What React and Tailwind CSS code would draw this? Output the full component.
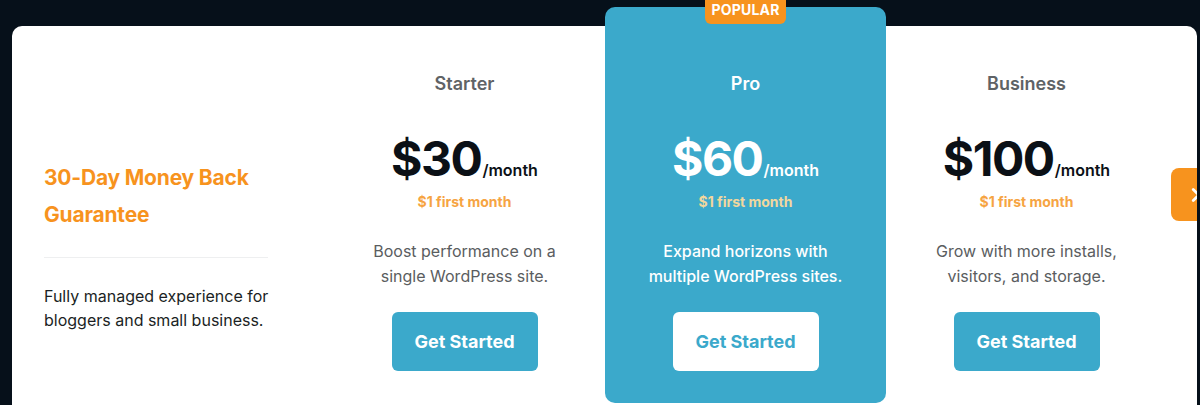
import React from 'react';
import { ChevronRight } from 'lucide-react';

const plans = [
  {
    name: 'Starter',
    price: '$30',
    desc: ['Boost performance on a', 'single WordPress site.'],
  },
  {
    name: 'Pro',
    price: '$60',
    desc: ['Expand horizons with', 'multiple WordPress sites.'],
    popular: true,
  },
  {
    name: 'Business',
    price: '$100',
    desc: ['Grow with more installs,', 'visitors, and storage.'],
  },
];

function PlanColumn({ plan }) {
  const hot = plan.popular;
  return (
    <div
      className={
        hot
          ? 'relative w-[281px] -mt-[19px] h-[396px] rounded-[10px] bg-[#3ba9cb] pt-[63px] flex flex-col items-center'
          : 'w-[281px] pt-[44px] flex flex-col items-center'
      }
    >
      {hot && (
        <div className="absolute left-[100px] -top-[17px] w-[81px] h-[34px] rounded-[6px] bg-[#f7931e] flex items-end justify-center pb-[5px]">
          <span className="text-[14px] leading-[18px] font-bold text-white tracking-[0.2px]">POPULAR</span>
        </div>
      )}

      {/* Plan name */}
      <h3 className={`text-[18px] leading-[28px] font-semibold ${hot ? 'text-white' : 'text-[#5f6366]'}`}>
        {plan.name}
      </h3>

      {/* Price */}
      <div className="mt-[37px] flex items-baseline">
        <span className={`text-[48px] leading-[48px] font-bold tracking-[-1.5px] ${hot ? 'text-white' : 'text-[#0b1016]'}`}>
          {plan.price}
        </span>
        <span className={`ml-[1px] text-[16px] font-semibold ${hot ? 'text-white' : 'text-[#0b1016]'}`}>/month</span>
      </div>
      <p className={`mt-[9px] text-[14px] leading-[20px] font-bold ${hot ? 'text-[#f2d79e]' : 'text-[#f6a443]'}`}>
        $1 first month
      </p>

      {/* Description */}
      <p className={`mt-[27px] text-[16px] leading-[25px] text-center ${hot ? 'text-white font-medium' : 'text-[#5a5d60]'}`}>
        {plan.desc[0]}
        <br />
        {plan.desc[1]}
      </p>

      <button
        className={`mt-[23px] w-[146px] h-[59px] rounded-[6px] text-[18px] font-bold ${
          hot ? 'bg-white text-[#3ba9cb]' : 'bg-[#3ba9cb] text-white'
        }`}
      >
        Get Started
      </button>
    </div>
  );
}

export default function App() {
  return (
    <div
      className="relative w-[1200px] h-[405px] overflow-hidden bg-[#06101a] pl-[12px] pt-[26px]"
      style={{ fontFamily: 'Inter, "Noto Sans", sans-serif' }}
    >
      <div className="w-[1185px] h-[420px] rounded-[10px] bg-white flex">
        {/* Guarantee column */}
        <div className="w-[312px] pl-[32px] pt-[133px]">
          <h2 className="text-[21px] leading-[37px] font-bold text-[#f7931e] tracking-[-0.2px]">
            30-Day Money Back
            <br />
            Guarantee
          </h2>
          <div className="mt-[24px] w-[224px] h-px bg-[#eeeff0]" />
          <p className="mt-[26px] text-[16px] leading-[24px] text-[#1b1f24]">
            Fully managed experience for
            <br />
            bloggers and small business.
          </p>
        </div>

        {plans.map((p) => (
          <PlanColumn key={p.name} plan={p} />
        ))}
      </div>

      {/* Side tab */}
      <div className="absolute left-[1171px] top-[168px] w-[26px] h-[53px] rounded-l-[8px] bg-[#f7931e] overflow-hidden flex items-center">
        <ChevronRight size={22} strokeWidth={3} className="text-white ml-[14px] shrink-0" />
      </div>
    </div>
  );
}
